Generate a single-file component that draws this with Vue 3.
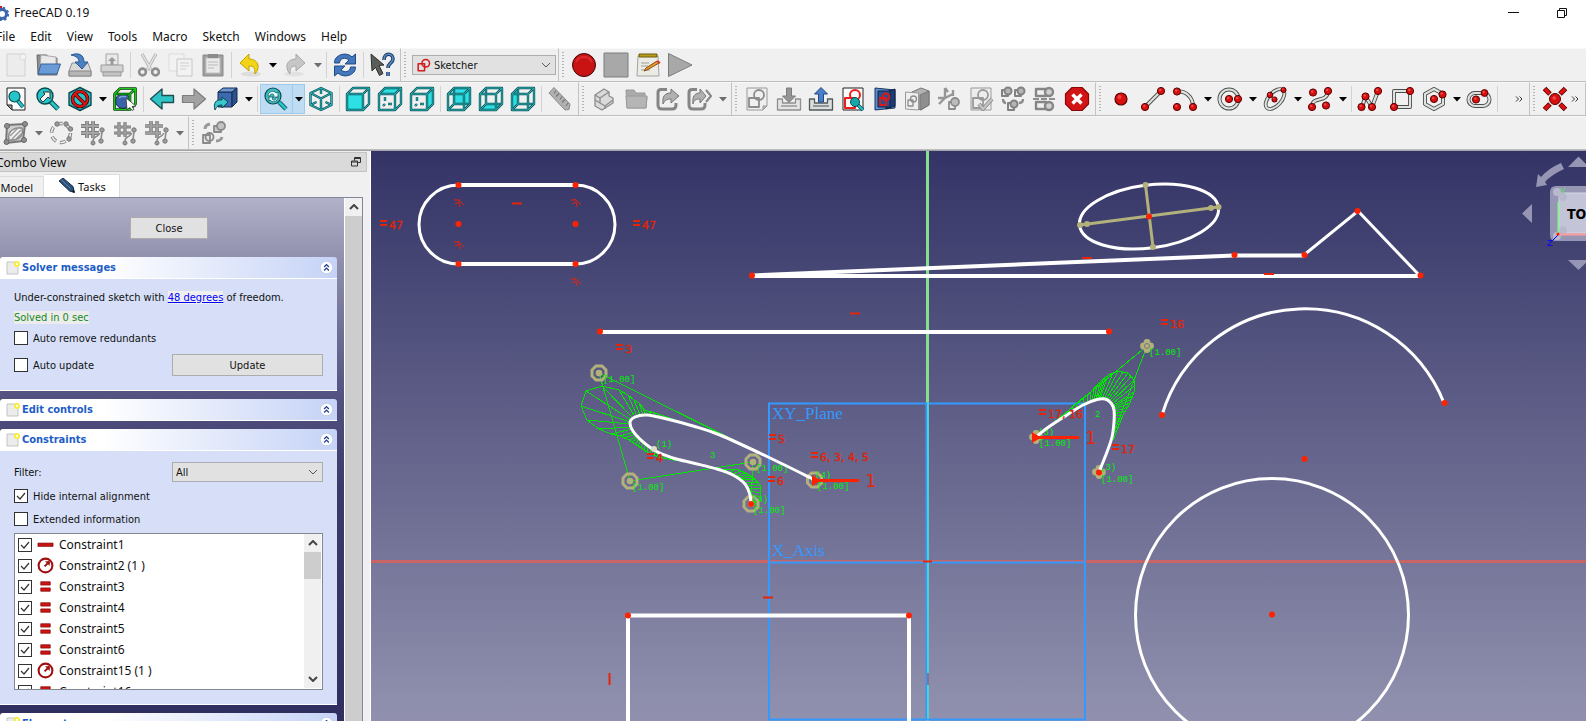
<template>
  <div class="app-window">
    <header class="title-bar">
      <svg class="app-logo" viewBox="0 0 16 16">
        <path d="M0 1h9v4H4v9H0z" fill="#cc1b1b" />
        <circle cx="9" cy="9" r="4.5" fill="none" stroke="#3a67ad" stroke-width="3" />
        <circle cx="9" cy="9" r="6.2" fill="none" stroke="#3a67ad" stroke-width="2" stroke-dasharray="2.4 2.47" />
      </svg>
      <span class="app-name">FreeCAD 0.19</span>
      <div class="window-buttons">
        <button class="win-btn" aria-label="Minimize">
          <svg viewBox="0 0 12 12"><path d="M0 5.500h11" stroke="#111" fill="none" /></svg>
        </button>
        <button class="win-btn" aria-label="Restore">
          <svg viewBox="0 0 12 12"><path d="M1.500 3.500h7v7h-7zM3.500 3.500v-2h7v7h-2" stroke="#111" fill="none" /></svg>
        </button>
      </div>
    </header>

    <nav class="menu-bar">
      <button v-for="m in menus" :key="m" class="menu-item">{{ m }}</button>
    </nav>

    <div v-for="(row, r) in toolbars" :key="r" class="tool-row">
      <div v-for="(bar, b) in row" :key="b" class="tool-bar" :class="{ grow: bar.grow }">
        <span v-if="b > 0" class="handle"></span>
        <div v-if="bar.combo" class="workbench">
          <svg class="workbench-icon" viewBox="0 0 24 24" v-html="icons.sketcher"></svg>
          <select class="workbench-select" aria-label="Workbench">
            <option>Sketcher</option>
          </select>
          <svg class="select-arrow" viewBox="0 0 10 6"><path d="M1 1l4 4 4-4" /></svg>
        </div>
        <template v-for="(item, i) in bar.items" :key="i">
          <span v-if="item === '|'" class="sep"></span>
          <span v-else class="tool-group" :class="{ active: item.startsWith('zoomMode') }">
            <button class="tool-btn" :aria-label="item.replace('+', '')">
              <svg class="tool-icon" viewBox="0 0 24 24" v-html="icons[item.replace(/\W/g, '')]"></svg>
            </button>
            <button v-if="/[+-]$/.test(item)" class="drop-btn" :class="{ off: item.endsWith('-') }" aria-label="More">
              <svg viewBox="0 0 8 5"><path d="M0 0h8L4 4.500z" /></svg>
            </button>
          </span>
        </template>
        <button v-if="bar.more" class="more-btn" aria-label="Show more">
          <svg viewBox="0 0 8 6"><path d="M1 0.500l2.500 2.500L1 5.500M4.500 0.500L7 3 4.500 5.500" /></svg>
        </button>
      </div>
    </div>

    <main class="workspace">
      <aside class="combo-view">
        <div class="dock-title">
          <span class="dock-name">Combo View</span>
          <button class="float-btn" aria-label="Float">
            <svg viewBox="0 0 10 10"><path d="M3.500 3.500v-3h6v5h-3M.5 4h6v5h-6zM.5 5h6M3.500 1.500h6" /></svg>
          </button>
        </div>
        <div class="tabs">
          <button class="tab">Model</button>
          <button class="tab current">
            <svg viewBox="0 0 18 16">
              <path d="M1 3l4-3 10 8.500 1.500 6-5-1.500z" fill="#2c5078" stroke="#16304d" />
              <path d="M3.500 2l9 8.500" stroke="#5d86b3" fill="none" />
              <path d="M14 14l2.500.5-.8-3z" fill="#111" />
            </svg>
            Tasks
          </button>
        </div>

        <div class="task-frame">
          <div class="task-panel">
            <button class="push close-btn">Close</button>

            <section class="group">
              <header class="group-head">
                <svg class="note" viewBox="0 0 14 14" v-html="noteIcon"></svg>
                <h2>Solver messages</h2>
                <button class="fold" aria-label="Collapse"><svg viewBox="0 0 12 12" v-html="foldIcon"></svg></button>
              </header>
              <div class="group-body">
                <p class="msg">Under-constrained sketch with <a href="#">48 degrees</a> of freedom.</p>
                <p class="solved"><span>Solved in 0 sec</span></p>
                <label class="check redundants"><input type="checkbox"> Auto remove redundants</label>
                <div class="split update-row">
                  <label class="check"><input type="checkbox"> Auto update</label>
                  <button class="push">Update</button>
                </div>
              </div>
            </section>

            <section class="group">
              <header class="group-head">
                <svg class="note" viewBox="0 0 14 14" v-html="noteIcon"></svg>
                <h2>Edit controls</h2>
                <button class="fold" aria-label="Expand"><svg viewBox="0 0 12 12" v-html="foldIcon"></svg></button>
              </header>
            </section>

            <section class="group">
              <header class="group-head">
                <svg class="note" viewBox="0 0 14 14" v-html="noteIcon"></svg>
                <h2>Constraints</h2>
                <button class="fold" aria-label="Collapse"><svg viewBox="0 0 12 12" v-html="foldIcon"></svg></button>
              </header>
              <div class="group-body">
                <div class="split">
                  <label for="filter">Filter:</label>
                  <div class="filter">
                    <select id="filter">
                      <option>All</option>
                    </select>
                    <svg class="select-arrow" viewBox="0 0 10 6"><path d="M1 1l4 4 4-4" /></svg>
                  </div>
                </div>
                <label class="check hide-internal"><input type="checkbox" checked> Hide internal alignment</label>
                <label class="check extended"><input type="checkbox"> Extended information</label>
                <div class="list">
                  <ul>
                    <li v-for="c in constraints" :key="c.name">
                      <label class="check">
                        <input v-model="c.on" type="checkbox">
                        <svg viewBox="0 0 18 18" v-html="constraintIcons[c.kind]"></svg>
                        {{ c.name }}
                      </label>
                    </li>
                  </ul>
                  <div class="scroll">
                    <button class="up" aria-label="Up"><svg viewBox="0 0 10 6"><path d="M1 5l4-4 4 4" /></svg></button>
                    <span class="thumb"></span>
                    <button class="down" aria-label="Down"><svg viewBox="0 0 10 6"><path d="M1 1l4 4 4-4" /></svg></button>
                  </div>
                </div>
              </div>
            </section>

            <section class="group">
              <header class="group-head">
                <svg class="note" viewBox="0 0 14 14" v-html="noteIcon"></svg>
                <h2>Elements</h2>
                <button class="fold" aria-label="Collapse"><svg viewBox="0 0 12 12" v-html="foldIcon"></svg></button>
              </header>
            </section>
          </div>
          <div class="scroll panel-scroll">
            <button class="up" aria-label="Up"><svg viewBox="0 0 10 6"><path d="M1 5l4-4 4 4" /></svg></button>
            <span class="thumb"></span>
          </div>
        </div>
      </aside>

      <section class="viewport">
        <svg class="scene">
          <g transform="translate(-371 -151)">
            <!-- axes and origin planes -->
            <path class="x-axis" d="M371 561.500H2600" />
            <path class="y-axis" d="M927.500 151V2000" />
            <path class="plane-line" d="M769 403.500H1085V719.500H769zM769 562.500H1085" />
            <path class="y-plane" d="M926.500 403V719" />
            <path class="y-glow" d="M928 403V719" />
            <text class="plane-text" x="772" y="419">XY_Plane</text>
            <text class="plane-text" x="772" y="556">X_Axis</text>

            <!-- construction geometry of the ellipse -->
            <ellipse class="geo" cx="1149" cy="216.500" rx="70" ry="31.500" transform="rotate(-7.400 1149 216.500)" />
            <path class="cons" d="M1080 225L1218.500 207M1145.500 185L1153 247" />
            <circle v-for="p in consPoints" :key="p.join()" class="cons-dot" :cx="p[0]" :cy="p[1]" r="3" />

            <!-- plain edges -->
            <path class="edge" d="M458.500 185H575.500M458.500 264H575.500M600 332H1108M752 276H1420M1234 255.500H1304M628 740V615.500H909V740" />
            <path class="geo" d="M458.500 185a39.500 39.500 0 0 0 0 79M575.500 185a39.500 39.500 0 0 1 0 79M1304 255L1358 211L1420 276M1162 415A149.500 149.500 0 0 1 1444 403" />
            <path class="edge" d="M752 275.500L1234 255.500" />
            <circle class="geo" cx="1272" cy="615" r="136.500" />

            <!-- curvature combs and control polygons -->
            <path class="comb" :d="combs" />
            <path class="comb" d="M814 480L599 373L630 481L753 462L751 504M1036 437L1147 346L1099 472" />
            <g v-for="p in poles" :key="p.join()">
              <path class="pole-ring" :d="ring(p)" />
              <circle class="cons-dot" :cx="p[0]" :cy="p[1]" r="3.300" />
            </g>
            <g v-for="p in smallPoles" :key="p.join()">
              <circle v-for="o in lobes" :key="o.join()" class="cons-dot" :cx="p[0] + o[0]" :cy="p[1] + o[1]" r="3.400" />
              <circle class="pole-eye" :cx="p[0]" :cy="p[1]" r="2.500" />
            </g>
            <text v-for="(t, i) in greenTexts" :key="i" class="green" :x="t[0]" :y="t[1]">{{ t[2] }}</text>
            <path class="geo" :d="splineA" />
            <path class="geo" :d="splineB" />
            <circle class="knot" cx="654" cy="449" r="3" />

            <!-- constraint symbols -->
            <g v-for="(t, i) in equals" :key="i">
              <path class="eq-bar" :d="`M${t[0]} ${t[1] - 8}h7M${t[0]} ${t[1] - 4}h7`" />
              <text class="red" :x="t[0] + 9" :y="t[1]">{{ t[2] }}</text>
            </g>
            <path class="eq-bar" d="M512 203.500h10M850 313.500h10M1082 258h10M1264 274h10M763 597.500h10M609.500 673v12M923 561.500h9" />
            <path class="faint-mark" d="M928 673v12" />
            <path v-for="p in tangents" :key="p.join()" class="tangent" :d="`M${p[0] - 5} ${p[1] - 3}l5 0 5 5M${p[0] - 1} ${p[1] - 4}l5 5M${p[0] - 4} ${p[1] + 1}l4-2 1 5`" />
            <path class="dim" d="M817 480.500H859M1036 437.500H1079" />
            <path class="dim-head" d="M812 475L821 480.500L812 486zM1032 432L1041 437.500L1032 443z" />
            <text class="dim-text" x="865" y="487">1</text>
            <text class="dim-text" x="1085" y="444">1</text>
            <circle v-for="p in vertices" :key="p.join()" class="vertex" :cx="p[0]" :cy="p[1]" r="3" />

            <!-- navigation cube -->
            <g class="nav">
              <path d="M1568 167L1578.500 156.500L1589 167zM1568 260H1589L1578.500 270zM1532 204V223L1522 213.500z" />
              <path d="M1561 163L1564 169Q1551 175 1545 182L1547 185L1536 187L1538 174L1541 177Q1549 168 1561 163z" />
              <path d="M1556 186H1600V241H1556Q1550 241 1550 235V192Q1550 186 1556 186z" />
            </g>
            <path class="nav-face" d="M1562 193H1600V233H1562Q1559 233 1559 230V196Q1559 193 1562 193z" />
            <circle v-for="p in navCorners" :key="p.join()" class="nav-corner" :cx="p[0]" :cy="p[1]" r="4" />
            <path class="nav-y" d="M1558.500 202V234" />
            <path class="nav-x" d="M1558 234.500H1600" />
            <path class="nav-z" d="M1558 235L1552 241" />
            <circle class="vertex" cx="1558" cy="234" r="1.500" />
            <text class="nav-top" x="1567" y="219">TOP</text>
            <text class="nav-label y" x="1560" y="194">Y</text>
            <text class="nav-label z" x="1547" y="246">Z</text>
          </g>
        </svg>
      </section>
    </main>
  </div>
</template>

<script setup>
import { reactive } from 'vue';

const menus = ['File', 'Edit', 'View', 'Tools', 'Macro', 'Sketch', 'Windows', 'Help'];

// "|" separator, "+" drop-down, "-" disabled drop-down
const toolbars = [
  [
    { items: ['new', 'open', 'save', 'print', '|', 'cut', 'copy', 'paste', '|', 'undo+', 'redo-', '|', 'refresh', '|', 'whats'] },
    { combo: true, items: [] },
    { grow: true, items: ['record', 'stop', 'macros', 'play'] }
  ],
  [
    {
      items: [
        'fitAll', 'fitSel', 'drawStyle+', 'bbox', '|', 'back', 'forward', 'linkNav+', '|', 'zoomMode+', 'iso', '|',
        'front', 'top', 'right', '|', 'rear', 'bottom', 'left', '|', 'measure'
      ]
    },
    { items: ['part', 'folder', 'link', 'linkGroup-'] },
    {
      items: [
        'newSketch', 'editSketch', 'leaveSketch', 'viewSketch', 'viewSection', 'mapSketch', 'reorient', 'validate',
        'merge', 'mirror', 'stopOp'
      ]
    },
    {
      grow: true,
      more: true,
      items: [
        'point', 'line', 'arc+', 'circle+', 'ellipse+', 'bspline+', '|', 'polyline', 'rect', 'polygon+', 'slot', '|'
      ]
    },
    { more: true, items: ['coincident'] }
  ],
  [
    { items: ['bsInfo-', 'toBspline', 'degree', 'knotInc', 'knotDec-'] },
    { grow: true, items: ['switchVirtual'] }
  ]
];

const constraints = reactive([
  { name: 'Constraint1', kind: 'h', on: true },
  { name: 'Constraint2 (1 )', kind: 'd', on: true },
  { name: 'Constraint3', kind: 'e', on: true },
  { name: 'Constraint4', kind: 'e', on: true },
  { name: 'Constraint5', kind: 'e', on: true },
  { name: 'Constraint6', kind: 'e', on: true },
  { name: 'Constraint15 (1 )', kind: 'd', on: true },
  { name: 'Constraint16', kind: 'e', on: true }
]);

const constraintIcons = {
  h: '<path d="M1 7.500h16v3.500H1z" fill="#c81414" stroke="#7a0000" stroke-width=".7"/>',
  d: '<circle cx="9" cy="9" r="7.300" fill="none" stroke="#a01010" stroke-width="2.200"/><path d="M8 10l5-5" stroke="#a01010" stroke-width="2"/><path d="M13.500 4.500v5l-5-5z" fill="#a01010"/>',
  e: '<path d="M4 4h10v3.500H4zM4 10.500h10V14H4z" fill="#d01414" stroke="#8a0808" stroke-width=".8"/>'
};

const noteIcon = '<path d="M1 1h11v12H1z" fill="#ececec" stroke="#c4c4c4"/><circle cx="11" cy="3" r="3" fill="#f7ef3a"/><circle cx="11" cy="3" r="1.200" fill="#fffde0"/>';
const foldIcon = '<circle cx="6" cy="6" r="5.800" fill="#fff" stroke="#b4c2e4" stroke-width=".7"/><path d="M3.800 5.500L6 3.300l2.200 2.200M3.800 8.800L6 6.600l2.200 2.200" fill="none" stroke="#1c3f94" stroke-width="1.200"/>';

// ---- icon helpers ----
const G = '#8c8c8c';
const path = (d, fill, stroke = 'none', w = 1) => `<path d="${d}" fill="${fill}" stroke="${stroke}" stroke-width="${w}" stroke-linejoin="round"/>`;
const wire = (d, out = '#0e565b', inn = '#27b4b8') => path(d, 'none', out, 2.4) + path(d, 'none', inn, 1);
const rail = d => path(d, 'none', '#4a4f4c', 4) + path(d, 'none', '#dfe3e0', 2.2);
const ball = (x, y, r = 3.6) => `<circle cx="${x}" cy="${y}" r="${r}" fill="#d80f0f" stroke="#5a0000" stroke-width="1"/><circle cx="${x - 0.8}" cy="${y - 1}" r="${r / 3}" fill="#f04a4a"/>`;
const face = d => path(d, '#2ce0e4');
const cubeHull = 'M1 7H17V23H1zM1 7L7 1H23L17 7M23 1V17L17 23';
const cubeBack = 'M7 1V17H23M7 17L1 23';
const circle = (x, y, r, fill, stroke, w = 1) => `<circle cx="${x}" cy="${y}" r="${r}" fill="${fill}" stroke="${stroke}" stroke-width="${w}"/>`;
const skBox = (c, w = 1.6) => path('M4 11h10v10H4z', 'none', c, w) + circle(14, 8, 5, 'none', c, w);
const sheet = (fill = '#ededed', s = '#9a9a9a') => path('M2 1h20v22H2z', fill, s);
const boxFrame = 'M1.500 7H17V22.500H1.500zM1.500 7L7 1.500H22.500L17 7M22.500 1.500V17L17 22.500';
const beads = circle(21, 9, 2.2, '#9c9c9c', '#777') + circle(20, 20, 2.2, '#9c9c9c', '#777') + circle(12, 22, 2, '#9c9c9c', '#777') + path('M12 20c0-6 4-2 7-8M21 11l-1 8', 'none', '#8c8c8c', 1.6);
const hash = (w, d) => path(d, 'none', '#7d7d7d', w) + path(d, 'none', '#a6a6a6', w - 2) + beads;

const icons = {
  sketcher: path('M2 10h11v12H2z', 'none', '#d01c1c', 2.6) + circle(15, 9, 6.5, 'none', '#d01c1c', 2.6),
  new: path('M3 1h18v22H3z', '#ececec', '#d2d2d2') + circle(19, 4, 3, '#f4f4f4', '#dadada'),
  open: path('M1 2h10l1 3h9v17H2z', '#8d8d8d', '#6d6d6d') + path('M5 2l15 2v10H4z', '#e9e9e9', '#aaa') + path('M5 11H24.500L21 21H2z', '#6a9bd6', '#34629c'),
  save: path('M4 10h16l3 8v5H1v-5z', '#d8d8d8', '#8f8f8f') + path('M1 18h22v5H1z', '#b5b5b5', '#8a8a8a') + path('M3 2c8-3 13 0 13 7h4l-6 7-7-7h4c0-3-2-6-8-7z', '#4a7fc0', '#2c5a95'),
  print: path('M6 1h12v11H6z', '#e9e9e9', '#a5a5a5') + path('M1 12h22v7H1z', '#d3d3d3', '#9b9b9b') + path('M3 19h18v4H3z', '#c4c4c4', '#9b9b9b') + path('M12 4l4 4h-2.500v4h-3V8H8z', '#9a9a9a'),
  cut: path('M5 1l9 16M19 1l-9 16', 'none', '#a8a8a8', 3) + path('M5 1l9 16M19 1l-9 16', 'none', '#e0e0e0', 1.6) + circle(5.5, 19, 3.4, 'none', '#8e8e8e', 2.6) + circle(18.5, 19, 3.4, 'none', '#8e8e8e', 2.6),
  copy: path('M0 1h15v17H0z', '#f2f2f2', '#dcdcdc') + path('M8 6h15v17H8z', '#f2f2f2', '#c6c6c6') + path('M11 10h9M11 13h9M11 16h6', 'none', '#cfcfcf', 1.2),
  paste: path('M2 2h20v21H2z', '#9f9f9f', '#8a8a8a') + path('M5 5h14v15H5z', '#eaeaea', '#c0c0c0') + path('M7 1h10v4H7z', '#8b8b8b') + path('M7 9h10M7 12h10M7 15h6', 'none', '#bbb'),
  undo: '<ellipse cx="13" cy="21" rx="10" ry="2.500" fill="#ddd"/>' + path('M2 10L11 1v5c9 0 12 8 6 15 0-6-1-8-6-8v5z', '#f2d417', '#c2a200'),
  redo: '<ellipse cx="11" cy="21" rx="10" ry="2.500" fill="#e2e2e2"/>' + path('M22 10L13 1v5c-9 0-12 8-6 15 0-6 1-8 6-8v5z', '#c6c6c6', '#a9a9a9'),
  refresh: path('M1.500 10C1 2 13-2 19 4l3.500-3v10H12l4-4C12 4 7 5 6.500 10z', '#4478bd', '#1f4a85') + path('M22.500 14c.5 8-11.500 12-17.500 6l-3.500 3V13H12l-4 4c4 3 9 2 9.500-3z', '#4478bd', '#1f4a85'),
  whats: path('M1 1l13 11-5 .5 4 8-3.500 2-4-8L2 18z', '#5a5e5a', '#2f332f') + path('M14 7c0-8 9-7 9-1 0 4-5 4-5 9M18 19v4', 'none', '#1c3a66', 3.6) + path('M14 7c0-8 9-7 9-1 0 4-5 4-5 9M18 19v4', 'none', '#5b8ac6', 1.6),
  record: circle(12, 12, 11.5, '#c91212', '#3a0a0a', 1) + path('M4 9a9 9 0 0 1 16 0', 'none', '#dd2c2c', 2),
  stop: path('M0 0h24v24H0z', '#a8a8a8', '#7c7c7c'),
  macros: path('M2 3h20l1 20H1z', '#ecece4', '#a2a2a2') + path('M3 1h18v3H3z', '#b79c1c', '#6f5d0c') + path('M5 10h8M5 13h7M5 17h9', 'none', '#9c9c9c') + path('M23 10L11 17l-3 1 2-3L21 8z', '#e89a2a', '#8a4c10') + path('M21 8l3 2', 'none', '#c33', 2),
  play: path('M0.500 0.500v23L24 12z', '#a8a8a8', '#7c7c7c'),

  fitAll: path('M3 1h18v22H8l-5-5z', '#fbfbfb', '#222') + path('M3 18h5v5z', '#999', '#222') + path('M14 14l5 6', 'none', '#0b4b50', 4) + path('M14 14l5 6', 'none', '#25c4c8', 2.4) + circle(10.5, 9.500, 5.500, '#25c4c8', '#0b4b50', 1.2),
  fitSel: path('M14 14l8 8', 'none', '#0b4b50', 5) + path('M14 14l8 8', 'none', '#25c4c8', 3) + circle(9, 9, 8, '#25c4c8', '#0b4b50', 1.4) + path('M4 12l5-5-2-2h7v7l-2-2-5 5z', '#f4f4f4', '#333'),
  drawStyle: path('M12 0.500l11 5.500v12L12 23.500 1 18V6z', '#25c4c8', '#0b4b50', 1.4) + circle(12, 12, 7.500, 'none', '#4a0000', 3.6) + path('M7 7l10 10', 'none', '#4a0000', 3.6) + circle(12, 12, 7.5, 'none', '#e01414', 2) + path('M7 7l10 10', 'none', '#e01414', 2),
  bbox: circle(10, 14, 7.500, '#3a62a8', '#16305c') + path('M6 11q3-3 7-1', 'none', '#7ea4dc', 1.6) + path(boxFrame, 'none', '#063f06', 2.6) + path(boxFrame, 'none', '#19c819', 1.2) + path('M13 11l10 8-4 .5 2 3-2 1-2-3-3 2z', '#fff', '#333', 0.8),
  back: path('M0.500 12L12 2v6.500h11.500v7H12V22z', '#2fc3c6', '#1f4e50', 1.4),
  forward: path('M23.500 12L12 2v6.500H0.500v7H12V22z', '#a2a2a2', '#7d7d7d', 1.2),
  linkNav: path('M4 5h14v15H4z', '#3d6aae', '#142c52') + path('M4 5l5-4h14l-5 4z', '#6d98d4', '#142c52') + path('M23 1v14l-5 5V5z', '#2d5188', '#142c52') + path('M1 23c-2-7 1-11 7-10v-3l6 5-6 6v-3c-4 0-5 1-7 5z', '#39c8cb', '#0b4b50'),
  zoomMode: path('M15 15l7 7', 'none', '#0b4b50', 4.500) + path('M15 15l7 7', 'none', '#25c4c8', 2.8) + circle(9, 9, 8, '#39bfc3', '#0b4b50', 1.2) + path('M4 9c0-5 6-6 8-3l2-1v5H9l1-2C8 6 6 7 6 9zM14 10c0 5-6 6-8 3l-1 1v-4h4l-1 2c2 2 4 1 4-1z', '#dff', '#164a4c', 0.7),
  iso: wire('M12 1l10.500 5v12L12 23 1.500 18V6zM1.500 6L12 11.500 22.500 6M12 11.500V23M12 1v6M1.500 18l6-3M22.500 18l-6-3'),
  front: face('M1 7H17V23H1z') + wire(cubeHull),
  top: face('M1 7L7 1H23L17 7z') + wire(cubeHull) + wire('M7 10v4M7 17l-2 2M10 17h4'),
  right: face('M17 7L23 1V17L17 23z') + wire(cubeHull) + wire('M7 10v4M7 17l-2 2M10 17h4'),
  rear: face('M7 1H23V17H7z') + wire(cubeBack) + wire(cubeHull),
  bottom: face('M1 23L7 17H23L17 23z') + wire(cubeBack) + wire(cubeHull),
  left: face('M1 7L7 1V17L1 23z') + wire(cubeBack) + wire(cubeHull),
  measure: path('M1 6L6 0.500 22 17l-1 5.500-4 .5z', '#b0b0b0', '#8a8a8a') + path('M8 3.500l-2 3M11 6.500l-3 3M14 9.500l-2 3M17 12.500l-3 3M20 16l-2 3', 'none', '#777', 1.2),

  part: path('M3 8l9-6 5 3v4l4 2v5l-11 7-7-4z', '#dadada', G, 1.3) + path('M3 8l5 3 9-6M8 11v5l5 3 8-6M3 13l5 3M13 19v3', 'none', G, 1.3),
  folder: path('M2 3h8l2 3h9v4h2l-1 11H3z', '#ababab', '#9a9a9a') + path('M2 9h21l-1 12H3z', '#b5b5b5', '#9a9a9a'),
  link: path('M11 2.500H5q-3 0-3 3V18q0 4 4 4h10q4 0 4-4v-2', 'none', '#858585', 3) + path('M7 17c-1-8 2-11 8-11V2l8 7-8 7v-4c-4 0-6 1-8 5z', '#b0b0b0', '#777'),
  linkGroup: path('M9 2.500H4q-3 0-3 3V18q0 4 4 4h8q4 0 4-4v-2', 'none', '#858585', 3) + path('M5 17c-1-8 2-11 7-11V2l6 7-6 7v-4c-4 0-6 1-7 5z', '#b0b0b0', '#777') + path('M18 3l5 6-5 6', 'none', '#858585', 2),

  newSketch: path('M2 1h20v18l-4 4H2z', '#efefef', '#9a9a9a') + path('M18 23v-4h4z', '#bbb', '#999') + path('M4 11h10v9H4z', 'none', G, 1.8) + circle(14, 8, 5, 'none', G, 1.8),
  editSketch: path('M0.500 12h5v4h13v-4h5v11h-23z', '#e4e4e4', '#8f8f8f', 1.3) + path('M4 19h16', 'none', '#aaa', 2) + path('M9.500 1h5v8h4L12 15.500 5.500 9h4z', '#959595', '#7c7c7c'),
  leaveSketch: path('M0.500 12h5v4h13v-4h5v11h-23z', '#dcdcdc', '#505a5a', 1.3) + path('M4 19h16', 'none', '#8f9898', 2) + path('M9.500 15h5V7h4L12 0.500 5.500 7h4z', '#4b80c8', '#1e4a84'),
  viewSketch: sheet('#fafafa', '#222') + path('M4 11h10v10H4z', 'none', '#ee1c1c', 2) + circle(14, 8, 5, 'none', '#ee1c1c', 2) + path('M16 17l6 6', 'none', '#0b4b50', 3.500) + path('M16 17l6 6', 'none', '#25c4c8', 2) + circle(14, 15, 4.500, '#16a8a8', '#0b4b50'),
  viewSection: path('M2 1l20 2v18l-20 2z', '#5c8fd0', '#1d355e') + path('M13 5l9-3v17l-9 3z', '#1f3c70', '#122446') + path('M5 4h12v16H5z', '#2b4f8d', '#122446') + path('M7 11h6v7H7z', 'none', '#e01818', 1.8) + circle(13, 10, 3.500, 'none', '#e01818', 1.8),
  mapSketch: path('M7 5l9-4 8 3v14l-8 5-9-3z', '#b2b2b2', '#777') + path('M15 8l9-4v14l-9 5z', '#8f8f8f', '#777') + path('M0.500 5l13 1v17l-13-1z', '#efefef', '#999') + path('M3 13h5v6H3z', 'none', G, 1.3) + circle(8.5, 12, 3, 'none', G, 1.3),
  reorient: path('M8 1v10H1M8 11L2 17M8 11l8-4M8 1l3 4M16 3v6', 'none', '#969696', 2.4) + path('M12 15h6v7h-6z', 'none', G, 1.8) + circle(18, 15, 4, '#bcbcbc', G, 1.8),
  validate: sheet() + skBox('#9a9a9a', 1.8) + path('M10 17l4 5 9-10', 'none', '#888', 4) + path('M10 17l4 5 9-10', 'none', '#c4c4c4', 2.4),
  merge: path('M1 3h6v6H1zM14 3h6v6h-6zM7 16h6v7H7z', 'none', '#828282', 2) + circle(7, 4, 3.500, '#b5b5b5', '#828282', 2) + circle(20, 4, 3.5, '#b5b5b5', '#828282', 2) + circle(13, 17, 3.5, '#b5b5b5', '#828282', 2) + path('M2 12q0 4 3 4M22 12q0 4-4 4', 'none', '#8a8a8a', 2.4),
  mirror: path('M3 2h10v7H3zM3 15h10v7H3z', 'none', '#868686', 2.4) + circle(16, 5, 4, '#d0d0d0', '#868686', 2.4) + circle(16, 19, 4, '#d0d0d0', '#868686', 2.4) + path('M0 12h24', 'none', '#8d8d8d', 2.2).replace('/>', ' stroke-dasharray="6 2"/>'),
  stopOp: path('M7 0.500h10l6.500 6.500v10L17 23.500H7L0.500 17V7z', '#d31414', '#8c0606', 1.2) + path('M7.500 7.500l9 9M16.500 7.500l-9 9', 'none', '#fff', 3.4),

  point: circle(12, 12, 6, '#d80f0f', '#5a0000', 1.2) + circle(10.500, 10, 2, '#ee4242', 'none'),
  line: rail('M4 20L20 4') + ball(4, 20) + ball(20, 4),
  arc: rail('M4 4.500c9-1 16 6 16 15') + ball(4, 4.500) + ball(4, 20) + ball(20, 20),
  circle: circle(11, 12, 9.500, 'none', '#4a4f4c', 4) + circle(11, 12, 9.5, 'none', '#dfe3e0', 2.2) + ball(11, 12) + ball(20, 12),
  ellipse: '<g transform="rotate(-48 12 12)" fill="none"><ellipse cx="12" cy="12" rx="12" ry="6.500" stroke="#4a4f4c" stroke-width="3.800"/><ellipse cx="12" cy="12" rx="12" ry="6.500" stroke="#dfe3e0" stroke-width="2"/></g>' + ball(20.500, 3, 2.6) + ball(7, 8, 2.800) + ball(11.500, 12.500, 2.6),
  bspline: rail('M4 20c0-12 14-3 16-15') + ball(5, 5.500) + ball(20, 4) + ball(4, 20) + ball(18, 18.500),
  polyline: rail('M4 20L7.500 9.500 14 20 20 4') + ball(3.500, 20) + ball(7.500, 9.500) + ball(14, 20) + ball(20, 4),
  rect: rail('M4 4h16v16H4z') + ball(20, 4) + ball(4, 20),
  polygon: rail('M12 2l9 5v10l-9 5-9-5V7z') + ball(12, 12) + ball(20.5, 7.5),
  slot: rail('M8 6h8a6 6 0 0 1 0 13H8A6 6 0 0 1 8 6z') + ball(9, 12.500, 3.6) + ball(17.500, 6, 3.4),
  coincident: path('M1.500 1.500L7 7M22.500 1.500L17 7M1.500 22.500L7 17M22.500 22.500L17 17', 'none', '#5a0000', 5) + path('M2 2l4.500 4.500M22 2l-4.500 4.500M2 22l4.500-4.500M22 22l-4.500-4.500', 'none', '#e01010', 3.4) + ball(12, 12, 5.5),

  bsInfo: path('M3 4L21 3l-2 17L2 22z', '#cfcfcf', '#777', 2) + path('M5 19c-2-9 5-13 13-12 2 8-4 13-13 12z', '#f1f1f1', G, 1.6) + path('M6 15l8-8M8 18l9-9M12 18l5-5', 'none', '#999', 1.4) + circle(3, 5, 2.500, '#8e8e8e', '#666') + circle(21, 3, 2.5, '#8e8e8e', '#666') + circle(2.500, 21, 2.5, '#8e8e8e', '#666') + circle(20, 19, 2.5, '#8e8e8e', '#666'),
  toBspline: '<circle cx="12" cy="12" r="9.500" fill="none" stroke="#888" stroke-width="3.600" stroke-dasharray="6 4"/><circle cx="12" cy="12" r="9.500" fill="none" stroke="#efefef" stroke-width="1.600" stroke-dasharray="5 5" stroke-dashoffset="-.5"/>' + circle(8, 3, 2.2, '#999', '#777') + circle(17, 3, 2.2, '#999', '#777') + circle(21.500, 8, 2.2, '#999', '#777') + circle(20, 18, 2.2, '#999', '#777'),
  degree: hash(3.8, 'M6 0v17M12 0v17M0 5h18M0 12h18'),
  knotInc: hash(3.2, 'M6 1v15M12 1v15M1 6h17M1 12h17'),
  knotDec: hash(3.6, 'M6 0v12M12 0v17M0 5h18M0 12h16'),
  switchVirtual: path('M12 5h7v6h-7z', '#ccc', '#8a8a8a', 1.8) + circle(19, 5, 4, '#c2c2c2', '#8a8a8a', 1.8) + path('M1 14h7v8H1z', '#e4e4e4', '#8a8a8a', 1.8) + circle(7.500, 16, 4, 'none', '#8a8a8a', 1.8) + path('M3 8q0-4 5-5M14 20q5 0 6-4', 'none', '#999', 3)
};

// ---- sketch geometry ----
const vertices = [
  [458.5, 185], [575.5, 185], [458.5, 224], [575.5, 224], [458.5, 264], [575.5, 264],
  [600, 331.5], [1109, 331.5], [752, 275.5], [1234.5, 255], [1304.5, 255], [1357.5, 211], [1420.5, 275.5],
  [1149, 216.5], [1162, 415], [1444.5, 403], [1304.5, 459], [1272, 614.5], [628, 615.5], [909, 615.5],
  [751, 504], [1099, 472.5]
];
const consPoints = [[1080, 225], [1087, 224], [1211, 208], [1218.5, 207], [1145.5, 185], [1153, 247]];
const poles = [[599, 373], [630, 481], [753, 462], [751, 504], [814.500, 480]];
const smallPoles = [[1147, 346], [1036, 437], [1099, 472]];
const lobes = [[-3.500, 0], [3.500, 0], [0, -3.500], [0, 3.500]];
const tangents = [[459, 203], [576, 203], [459, 245], [576, 282]];
const navCorners = [[1557, 192], [1563, 197], [1563, 230], [1557, 236]];

const equals = [
  [380, 229, '47'], [633, 229, '47'], [616, 353, '3'], [769, 443, '5'], [811, 461, '6, 3, 4, 5'],
  [647, 462, '4'], [768, 485, '6'], [1161, 328, '16'], [1039, 418, '17, 16'], [1112, 453, '17']
];
const greenTexts = [
  [603, 382, '[1.00]'], [632, 490, '[1.00]'], [756, 471, '[1.00]'], [753, 513, '[1.00]'], [817, 489, '[1.00]'],
  [656, 447, '(1)'], [710, 458, '3'], [815, 478, '(4)'], [752, 502, '(4)'],
  [1149, 355, '[1.00]'], [1039, 446, '[1.00]'], [1101, 482, '[1.00]'], [1038, 435, '(3)'], [1100, 470, '(3)'], [1095, 417, '2']
];

// octagon round a control point
const ring = ([x, y]) => `M${x - 3} ${y - 7}h6l4 4v6l-4 4h-6l-4-4v-6z`;

// smooth path through points
function spline(p) {
  let d = `M${p[0]}`;
  for (let i = 0; i < p.length - 1; i++) {
    const a = p[i - 1] || p[i];
    const b = p[i];
    const c = p[i + 1];
    const e = p[i + 2] || c;
    d += `C${b[0] + (c[0] - a[0]) / 6} ${b[1] + (c[1] - a[1]) / 6} ${c[0] - (e[0] - b[0]) / 6} ${c[1] - (e[1] - b[1]) / 6} ${c}`;
  }
  return d;
}

const splineA = spline([
  [815, 480], [768, 457], [720, 435], [693, 426], [667, 419], [647, 415], [635, 417], [630, 423],
  [636, 435], [654, 450], [673, 458], [693, 463], [717, 469], [733, 475], [745, 484], [750, 495], [751, 504]
]);
const splineB = spline([
  [1037, 436], [1050, 426], [1067, 415], [1083, 405], [1097, 399.5], [1105, 399], [1111, 403], [1114, 410],
  [1114, 422], [1112, 437], [1107, 452], [1099, 472]
]);

// rows of [curve x, curve y, envelope x, envelope y, subdivisions]
function comb(rows) {
  let outer = '';
  let hairs = '';
  rows.forEach((row, i) => {
    outer += `${i ? 'L' : 'M'}${row[2]} ${row[3]}`;
    const next = rows[i + 1] || row;
    for (let k = 0; k < row[4]; k++) {
      const v = row.slice(0, 4).map((n, j) => Math.round((n + ((next[j] - n) * k) / row[4]) * 10) / 10);
      hairs += `M${v[0]} ${v[1]}L${v[2]} ${v[3]}`;
    }
  });
  return outer + hairs;
}

const combs = [
  [
    [673, 420, 673, 419, 1], [660, 417, 658, 414, 3], [648, 415, 645, 410, 2], [643, 415, 639, 403, 1],
    [640, 415, 634, 400, 1], [637, 416, 628, 395, 1], [635, 417, 619, 390, 1], [633, 418, 602, 386, 1],
    [631, 420, 586, 391, 1], [630, 422, 581, 406, 1], [630, 424, 587, 420, 1], [631, 427, 599, 429, 1],
    [632, 429, 611, 434, 1], [634, 432, 620, 436, 2], [637, 436, 629, 440, 3], [641, 440, 638, 446, 3],
    [648, 445, 647, 452, 3], [657, 451, 658, 457, 3], [672, 458, 678, 461, 1]
  ],
  [
    [718, 469, 724, 469, 2], [728, 473, 736, 469, 2], [735, 476, 746, 473, 3], [741, 480, 755, 479, 2],
    [745, 485, 760, 485, 2], [749, 491, 761, 493, 2], [750, 497, 760, 501, 2], [751, 503, 756, 505, 1]
  ],
  [
    [1060, 420, 1058, 420, 1], [1071, 412, 1068, 411, 3], [1082, 406, 1079, 401, 3], [1090, 402, 1091, 392, 3],
    [1096, 400, 1100, 382, 3], [1100, 399, 1108, 375, 2], [1104, 399, 1118, 371, 2], [1107, 401, 1128, 373, 2],
    [1110, 403, 1134, 380, 2], [1112, 406, 1134, 392, 3], [1113, 410, 1130, 403, 3], [1114, 416, 1123, 415, 4],
    [1113, 425, 1118, 428, 3], [1112, 436, 1113, 440, 1]
  ]
].map(comb).join('');
</script>

<style>
body { overflow: hidden; background: #f0f0f0; }
</style>

<style scoped>
* { box-sizing: border-box; }
.app-window {
  height: 100vh; display: flex; flex-direction: column; overflow: hidden;
  background: #f0f0f0; color: #111; font: 12px "Noto Sans", "Open Sans", sans-serif;
}
button { border: none; background: none; padding: 0; font: inherit; color: inherit; }
svg { display: block; flex: none; }

/* TITLE AND MENU */
.title-bar { display: flex; align-items: center; height: 25px; background: #fff; }
.app-logo { width: 16px; height: 16px; margin-left: -7px; margin-right: 5px; }
.window-buttons { display: flex; margin-left: auto; }
.win-btn { width: 48px; height: 25px; display: flex; align-items: center; justify-content: center; }
.win-btn svg { width: 12px; height: 12px; }
.menu-bar { display: flex; gap: 1px; height: 23px; padding-bottom: 1px; background: #fff; margin-left: -11px; }
.menu-item { padding: 0 7px; }

/* TOOLBARS */
.tool-row { display: flex; height: 34px; border-bottom: 1px solid #bdbdbd; flex: none; }
.tool-bar { display: flex; align-items: center; border-right: 1px solid #c3c3c3; padding-right: 2px; border-top: 1px solid #f8f8f8; }
.tool-bar.grow { flex: 1; min-width: 0; }
.tool-row:not(:nth-child(4)) .tool-bar.grow { border-right: none; }
.handle { width: 9px; height: 26px; background: repeating-linear-gradient(#b4b4b4 0 1px, #f0f0f0 1px 3px) 3px 0 / 2px 26px no-repeat; }
.tool-group { display: flex; height: 30px; }
.tool-group.active { background: #c0dcf3; box-shadow: inset 0 0 0 1px #9ccbf0; }
.tool-group.active .drop-btn { border-left: 1px solid #9ccbf0; }
.tool-btn { width: 32px; display: flex; align-items: center; justify-content: center; }
.tool-icon { width: 24px; height: 24px; overflow: visible; }
.drop-btn { width: 13px; display: flex; align-items: center; justify-content: center; }
.drop-btn svg { width: 8px; height: 5px; fill: #000; }
.drop-btn.off svg { fill: #6d6d6d; }
.sep { width: 1px; height: 26px; margin: 0 2px; background: #d2d2d2; }
.more-btn { margin-left: auto; width: 12px; height: 28px; display: flex; align-items: center; }
.more-btn svg { width: 8px; height: 6px; fill: none; stroke: #333; }
.select-arrow { width: 10px; height: 6px; fill: none; stroke: #555; pointer-events: none; }
.workbench { display: flex; align-items: center; width: 144px; height: 20px; margin: 0 0 0 2px; padding: 0 4px; background: #e1e1e1; border: 1px solid #adadad; }
.workbench-icon { width: 14px; height: 14px; }
select { appearance: none; flex: 1; min-width: 0; border: none; background: none; padding: 0 3px; font: inherit; color: inherit; outline: none; }
.workbench-select { font: 11px "DejaVu Sans Condensed", "Noto Sans", sans-serif; }

/* COMBO VIEW */
.workspace { flex: 1; min-height: 0; display: flex; border-top: 1px solid #a2a2a8; }
.combo-view { width: 371px; flex: none; display: flex; flex-direction: column; border-right: 1px solid #fff; }
.dock-title { display: flex; align-items: center; height: 20px; margin: 1px 3px 2px 0; padding-right: 5px; background: #dadada; border: 1px solid #c3c3c3; border-left: none; }
.dock-name { margin-left: -4px; }
.float-btn { margin-left: auto; }
.float-btn svg { width: 10px; height: 10px; fill: none; stroke: #333; }
.tabs { display: flex; align-items: flex-end; height: 23px; font: 11px "Noto Sans", "Open Sans", sans-serif; }
.tab { height: 21px; width: 44px; padding-right: 10px; text-align: right; border: 1px solid #dcdcdc; border-width: 1px 1px 0 0; }
.tab.current { display: flex; align-items: center; gap: 2px; width: 76px; height: 23px; padding: 0 0 0 14px; background: #fff; }
.tab svg { width: 18px; height: 16px; }
.task-frame { flex: 1; min-height: 0; display: flex; margin-right: 7px; border: solid #85859a; border-width: 1px 1px 0 0; overflow: hidden; }
.task-panel {
  flex: 1; padding: 19px 7px 0 0; overflow: hidden; font: 11px "DejaVu Sans Condensed", "Noto Sans", sans-serif;
  background: linear-gradient(#b1b1c8, #8f8fad 12%, #525180 38%, #3b3a6a 55%, #2f2e5e);
}
.push { height: 22px; background: #e1e1e1; border: 1px solid #adadad; }
.close-btn { display: block; width: 78px; margin: 0 auto 18px 130px; }
.group { margin-bottom: 8px; }
.group-head { display: flex; align-items: center; height: 22px; padding: 0 4px 0 6px; border-radius: 3px 3px 0 0; background: linear-gradient(90deg, #fff 30%, #c6d3f7); border-bottom: 1px solid #fff; }
.note { width: 14px; height: 14px; margin-right: 2px; }
h2 { margin: 0; font-size: 11px; font-weight: bold; color: #215dc6; }
.fold { margin-left: auto; }
.fold svg { width: 13px; height: 13px; }
.group-body { padding: 11px 14px 14px; background: #d6dff7; border-bottom: 1px solid #fff; }
.msg, .solved { margin: 0; line-height: 16px; white-space: nowrap; }
.msg a { color: #00f; background: #f0f0f0; }
.solved { margin-top: 4px; color: #148a1c; }
.solved span { background: #ececec; }
.check { display: flex; align-items: center; gap: 5px; height: 14px; white-space: nowrap; }
.check input {
  appearance: none; flex: none; width: 14px; height: 14px; margin: 0; background: #fff no-repeat center / 12px 12px; border: 1px solid #333;
}
.check input:checked { background-image: url("data:image/svg+xml,%3Csvg xmlns='http://www.w3.org/2000/svg' viewBox='0 0 12 12'%3E%3Cpath d='M2 6l3 3 5-6' fill='none' stroke='%23333' stroke-width='1.200'/%3E%3C/svg%3E"); }
.redundants { margin-top: 5px; }
.split { display: grid; grid-template-columns: 158px 1fr; align-items: center; }
.update-row { margin-top: 9px; }
.filter { display: flex; align-items: center; height: 20px; padding-right: 4px; background: #e1e1e1; border: 1px solid #adadad; }
.hide-internal { margin-top: 7px; }
.extended { margin-top: 9px; }
.list { display: flex; height: 157px; margin-top: 7px; padding: 0 1px 1px; overflow: hidden; background: #fff; border: 1px solid #828790; }
.list ul { flex: 1; margin: 0; padding: 0 0 0 2px; list-style: none; font: 12px "Noto Sans", "Open Sans", sans-serif; }
.list .check { height: 21px; }
.list svg { width: 17px; height: 17px; }
.scroll { width: 17px; flex: none; display: flex; flex-direction: column; background: #f0f0f0; }
.scroll button { height: 18px; display: flex; align-items: center; justify-content: center; }
.scroll svg { width: 10px; height: 6px; fill: none; stroke: #444; stroke-width: 2; }
.thumb { height: 27px; background: #cdcdcd; }
.down { margin-top: auto; }
.panel-scroll { width: 18px; border-left: 1px solid #fff; }
.panel-scroll .thumb { flex: 1; }

/* 3D VIEW */
.viewport { flex: 1; min-width: 0; background: linear-gradient(#333366, #9191af); }
.scene { width: 100%; height: 100%; overflow: hidden; }
.scene path { fill: none; }
.scene .geo { fill: none; stroke: #fff; stroke-width: 3; }
.edge { stroke: #fff; stroke-width: 4; }
.x-axis { stroke: #c86464; stroke-width: 3; }
.y-axis { stroke: #84e08c; stroke-width: 3; }
.plane-line { stroke: #3399ff; stroke-width: 2; }
.y-plane { stroke: #3399ff; stroke-width: 2; }
.y-glow { stroke: #4fd0d8; stroke-width: 2; }
.plane-text { font: 17px "Liberation Serif", serif; fill: #3399ff; }
.cons { stroke: #b2b17c; stroke-width: 3; }
.cons-dot { fill: #b2b17c; }
.pole-ring { stroke: #b2b17c; stroke-width: 3; }
.pole-eye { fill: none; stroke: #77767c; }
.knot { fill: #dedccb; }
.comb { stroke: #00e600; stroke-width: 1; shape-rendering: crispEdges; }
.green { font: 9px "Liberation Mono", monospace; fill: #00f000; }
.red { font: 11px "DejaVu Sans", sans-serif; fill: #f02000; stroke: #d02810; stroke-width: 0.400; }
.eq-bar { stroke: #e82408; stroke-width: 2; }
.faint-mark { stroke: #7a7890; stroke-width: 2; }
.tangent { stroke: #f02000; stroke-width: 1; }
.dim { stroke: #ff2200; stroke-width: 3; }
.scene .dim-head { fill: #ff2200; }
.dim-text { font: 18px "DejaVu Sans", sans-serif; fill: #e02810; }
.vertex { fill: #ff2200; }
.scene .nav path { fill: #9696b4; }
.scene .nav-face { fill: #c4c4d8; stroke: #d6d6e4; }
.nav-corner { fill: #b8b8ce; }
.nav-y { stroke: #8cf09a; stroke-width: 2; }
.nav-x { stroke: #ff9c9c; stroke-width: 2; }
.nav-z { stroke: #0000ff; }
.nav-top { font: bold 14px "Liberation Sans Narrow", "DejaVu Sans Condensed", sans-serif; fill: #000; }
.nav-label { font: 9px "Liberation Sans", sans-serif; }
.nav-label.y { fill: #5fe06a; }
.nav-label.z { fill: #0000ff; }
</style>
